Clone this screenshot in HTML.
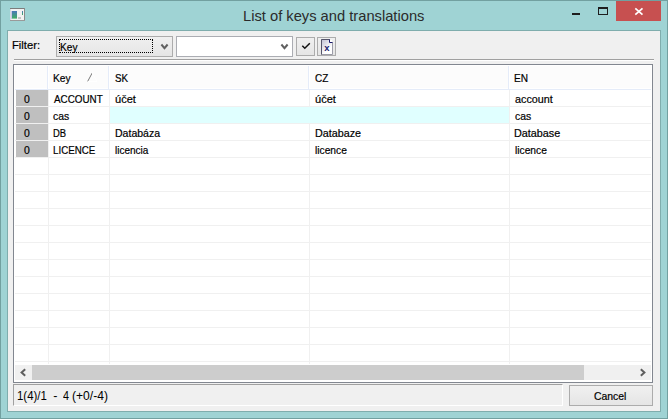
<!DOCTYPE html>
<html><head><meta charset="utf-8">
<style>
*{box-sizing:border-box;margin:0;padding:0}
html,body{width:668px;height:419px;overflow:hidden;background:#9fd3d4}
body{font-family:"Liberation Sans","DejaVu Sans",sans-serif;font-size:11px;color:#000;position:relative}
.abs{position:absolute}
#win{left:0;top:0;width:668px;height:419px;background:#9fd3d4;border:1px solid #72a0a0}
#inner{left:7px;top:30px;width:654px;height:382px;background:#f0f0f0;border:1px solid #7fadad}
.combo{height:21px;top:36px;border:1px solid #acacac;background:linear-gradient(#f0f0f0,#e5e5e5)}
.btn{border:1px solid #acacac;background:linear-gradient(#f0f0f0,#e5e5e5)}
#grid{left:13px;top:64px;width:640px;height:319px;background:#fff;border:1px solid #828790}
.hl{background:#e5ecf9;height:1px}
.vl{background:#e5ecf9;width:1px}
.rl{background:#f0f0f0;height:1px}
.cl{background:#f0f0f0;width:1px}
.ind{left:16px;width:32px;height:16px;background:#bfbfbf}
.t{white-space:nowrap;line-height:16px;height:16px;transform-origin:0 0;-webkit-text-stroke:0.2px #000}
</style></head><body>
<div id="win" class="abs"></div>
<div id="inner" class="abs"></div>
<!-- app icon -->
<svg class="abs" style="left:10px;top:8px" width="15" height="13" viewBox="0 0 15 13">
<defs><linearGradient id="g1" x1="0" y1="0" x2="0" y2="1"><stop offset="0" stop-color="#4a78b8"/><stop offset="1" stop-color="#3fae62"/></linearGradient></defs>
<rect x="0" y="0" width="15" height="13" fill="#f2f2f2"/>
<rect x="0" y="0" width="15" height="1" fill="#7c7c7c"/>
<rect x="14" y="0" width="1" height="13" fill="#8a8a8a"/>
<rect x="0" y="12" width="15" height="1" fill="#9a9a9a"/>
<rect x="0" y="1" width="1" height="11" fill="#d8dede"/>
<rect x="1" y="3" width="1" height="8" fill="#c9c6ea"/><rect x="2" y="3" width="5" height="7.6" fill="url(#g1)"/>
<rect x="8" y="9" width="3" height="2" fill="#c4c4c4"/>
<rect x="12" y="3" width="1" height="4" fill="url(#g1)"/>
</svg>
<!-- window buttons -->
<div class="abs" style="left:572px;top:13px;width:8px;height:2px;background:#1e1e1e"></div>
<div class="abs" style="left:598px;top:7px;width:10px;height:8px;border:1px solid #1e1e1e;border-top-width:2px"></div>
<div class="abs" style="left:616px;top:1px;width:45px;height:20px;background:#c75050"></div>
<svg class="abs" style="left:634px;top:7px" width="10" height="9" viewBox="0 0 10 9"><path d="M1.3 1.3 L8.5 7.7 M8.5 1.3 L1.3 7.7" stroke="#fff" stroke-width="1.7" fill="none"/></svg>

<div class="abs combo" style="left:56px;width:117px"></div>
<div class="abs" style="left:59px;top:39px;width:94px;height:14px;border:1px dotted #000"></div>
<svg class="abs" style="left:160px;top:43px" width="9" height="8" viewBox="0 0 9 8"><path d="M1.4 1.5 L4.5 5.1 L7.6 1.5" stroke="#606060" stroke-width="2" fill="none"/></svg>
<div class="abs combo" style="left:176px;width:117px;background:#fff;border-color:#abadb3"></div>
<svg class="abs" style="left:280px;top:43px" width="9" height="8" viewBox="0 0 9 8"><path d="M1.4 1.5 L4.5 5.1 L7.6 1.5" stroke="#606060" stroke-width="2" fill="none"/></svg>
<div class="abs btn" style="left:296px;top:37px;width:19px;height:19px"></div>
<svg class="abs" style="left:301px;top:42px" width="10" height="8" viewBox="0 0 10 8"><path d="M1.3 3.8 L3.8 6.3 L8.8 1.3" stroke="#111" stroke-width="1.5" fill="none"/></svg>
<div class="abs btn" style="left:317px;top:37px;width:19px;height:19px"></div>
<svg class="abs" style="left:321px;top:39px" width="12" height="16" viewBox="0 0 12 16">
<defs><linearGradient id="g2" x1="0" y1="0" x2="0.7" y2="1"><stop offset="0" stop-color="#bfbfd2"/><stop offset="0.75" stop-color="#ffffff"/></linearGradient></defs>
<path d="M0.5 0.5 H8.5 L11.5 3.5 V15.5 H0.5 Z" fill="url(#g2)" stroke="#9c9ca8" stroke-width="1"/>
<path d="M0.5 15.5 V0.5 H8.5" fill="none" stroke="#55556a" stroke-width="1"/>
<rect x="9" y="1" width="2" height="2.5" fill="#fff"/>
<path d="M8.5 0.5 V3.5 H11.5" fill="none" stroke="#1a1a6a" stroke-width="1"/>
<text x="3.3" y="11.8" font-family="Liberation Sans, sans-serif" font-size="9.5" font-weight="bold" fill="#1a1a6e">x</text>
</svg>
<div class="abs" style="left:14px;top:59px;width:640px;height:1px;background:#a0a0a0"></div>
<div class="abs" style="left:14px;top:60px;width:640px;height:1px;background:#fff"></div>

<div id="grid" class="abs"></div>
<div class="abs" style="left:15px;top:66px;width:636px;height:23px;background:#fcfcfc"></div><div class="abs" style="left:15px;top:88px;width:636px;height:1px;background:#fff"></div>
<div class="abs hl" style="left:15px;top:89px;width:636px"></div>
<div class="abs vl" style="left:47px;top:66px;height:23px"></div><div class="abs" style="left:48px;top:66px;height:23px;width:1px;background:#fff"></div>
<div class="abs vl" style="left:108px;top:66px;height:23px"></div><div class="abs" style="left:109px;top:66px;height:23px;width:1px;background:#fff"></div>
<div class="abs vl" style="left:308px;top:66px;height:23px"></div><div class="abs" style="left:309px;top:66px;height:23px;width:1px;background:#fff"></div>
<div class="abs vl" style="left:508px;top:66px;height:23px"></div><div class="abs" style="left:509px;top:66px;height:23px;width:1px;background:#fff"></div>
<svg class="abs" style="left:86px;top:72px" width="13" height="11" viewBox="0 0 13 11"><path d="M1.5 9.7 L6.2 1" stroke="#7a7a7a" stroke-width="1" fill="none"/><path d="M6.2 1 L11 9.5 H1.5" stroke="#fff" stroke-width="1" fill="none"/></svg>
<div class="abs cl" style="left:48px;top:90px;height:274px"></div>
<div class="abs cl" style="left:109px;top:90px;height:274px"></div>
<div class="abs cl" style="left:309px;top:90px;height:274px"></div>
<div class="abs cl" style="left:509px;top:90px;height:274px"></div>
<div class="abs rl" style="left:15px;top:106px;width:636px"></div><div class="abs rl" style="left:15px;top:123px;width:636px"></div><div class="abs rl" style="left:15px;top:140px;width:636px"></div><div class="abs rl" style="left:15px;top:157px;width:636px"></div><div class="abs rl" style="left:15px;top:174px;width:636px"></div><div class="abs rl" style="left:15px;top:191px;width:636px"></div><div class="abs rl" style="left:15px;top:208px;width:636px"></div><div class="abs rl" style="left:15px;top:225px;width:636px"></div><div class="abs rl" style="left:15px;top:242px;width:636px"></div><div class="abs rl" style="left:15px;top:259px;width:636px"></div><div class="abs rl" style="left:15px;top:276px;width:636px"></div><div class="abs rl" style="left:15px;top:293px;width:636px"></div><div class="abs rl" style="left:15px;top:310px;width:636px"></div><div class="abs rl" style="left:15px;top:327px;width:636px"></div><div class="abs rl" style="left:15px;top:344px;width:636px"></div><div class="abs rl" style="left:15px;top:361px;width:636px"></div>
<div class="abs" style="left:110px;top:107px;width:399px;height:16px;background:#e0ffff"></div>
<div class="abs ind" style="top:90px"></div>
<div class="abs ind" style="top:107px"></div>
<div class="abs ind" style="top:124px"></div>
<div class="abs ind" style="top:141px"></div>
<!-- scrollbar -->
<div class="abs" style="left:15px;top:365px;width:636px;height:15px;background:#f0f0f0"></div>
<div class="abs" style="left:32px;top:365px;width:552px;height:15px;background:#cdcdcd"></div>
<svg class="abs" style="left:19px;top:368px" width="8" height="9" viewBox="0 0 8 9"><path d="M6.2 1.3 L2.6 4.5 L6.2 7.7" stroke="#5e5e5e" stroke-width="2" fill="none"/></svg>
<svg class="abs" style="left:639px;top:368px" width="8" height="9" viewBox="0 0 8 9"><path d="M1.8 1.3 L5.4 4.5 L1.8 7.7" stroke="#5e5e5e" stroke-width="2" fill="none"/></svg>
<!-- status -->
<div class="abs" style="left:13px;top:384px;width:550px;height:22px;border:1px solid #fff;border-top-color:#a0a0a0;border-left-color:#a0a0a0"></div>
<div class="abs btn" style="left:569px;top:385px;width:84px;height:21px"></div>
<div class="abs t" id="filter" style="left:12.34px;top:37px;transform:scaleX(1.0192);">Filter:</div>
<div class="abs t" id="keyc" style="left:59.71px;top:39px;transform:scaleX(0.9205);">Key</div>
<div class="abs t" id="keyh" style="left:53.10px;top:70px;transform:scaleX(0.9315);">Key</div>
<div class="abs t" id="sk" style="left:114.55px;top:70px;transform:scaleX(0.8929);">SK</div>
<div class="abs t" id="cz" style="left:314.85px;top:70px;transform:scaleX(0.9071);">CZ</div>
<div class="abs t" id="en" style="left:514.41px;top:70px;transform:scaleX(0.9164);">EN</div>
<div class="abs t" id="r1k" style="left:53.50px;top:91px;transform:scaleX(0.8959);">ACCOUNT</div>
<div class="abs t" id="r2k" style="left:53.26px;top:108px;transform:scaleX(0.9455);">cas</div>
<div class="abs t" id="r3k" style="left:52.86px;top:125px;transform:scaleX(0.8571);">DB</div>
<div class="abs t" id="r4k" style="left:52.84px;top:142px;transform:scaleX(0.8860);">LICENCE</div>
<div class="abs t" id="r1s" style="left:114.50px;top:91px;transform:scaleX(1.0049);">účet</div>
<div class="abs t" id="r3s" style="left:114.88px;top:125px;transform:scaleX(0.9570);">Databáza</div>
<div class="abs t" id="r4s" style="left:115.14px;top:142px;transform:scaleX(0.9103);">licencia</div>
<div class="abs t" id="r1c" style="left:314.80px;top:91px;transform:scaleX(1.0049);">účet</div>
<div class="abs t" id="r3c" style="left:314.57px;top:125px;transform:scaleX(0.9783);">Databaze</div>
<div class="abs t" id="r4c" style="left:314.83px;top:142px;transform:scaleX(0.9313);">licence</div>
<div class="abs t" id="r1e" style="left:514.86px;top:91px;transform:scaleX(0.9792);">account</div>
<div class="abs t" id="r2e" style="left:514.86px;top:108px;transform:scaleX(0.9455);">cas</div>
<div class="abs t" id="r3e" style="left:514.36px;top:125px;transform:scaleX(0.9826);">Database</div>
<div class="abs t" id="r4e" style="left:514.63px;top:142px;transform:scaleX(0.9313);">licence</div>
<div class="abs t" id="i1" style="left:23.96px;top:91px;transform:scaleX(0.9455);">0</div>
<div class="abs t" id="i2" style="left:23.96px;top:108px;transform:scaleX(0.9455);">0</div>
<div class="abs t" id="i3" style="left:23.96px;top:125px;transform:scaleX(0.9455);">0</div>
<div class="abs t" id="i4" style="left:23.96px;top:142px;transform:scaleX(0.9455);">0</div>
<div class="abs t" id="s1" style="left:16.98px;top:388px;transform:scaleX(0.9161);font-size:12.5px;-webkit-text-stroke:0">1(4)/1</div>
<div class="abs t" id="s2" style="left:53.30px;top:388px;transform:scaleX(1.0000);font-size:12.5px;-webkit-text-stroke:0">-</div>
<div class="abs t" id="s3" style="left:63.08px;top:388px;transform:scaleX(0.8640);font-size:12.5px;-webkit-text-stroke:0">4</div>
<div class="abs t" id="s4" style="left:71.87px;top:388px;transform:scaleX(0.9678);font-size:12.5px;-webkit-text-stroke:0">(+0/-4)</div>
<div class="abs t" id="cancel" style="left:594.13px;top:388px;transform:scaleX(0.9474);">Cancel</div>
<div class="abs t" id="title" style="left:243.07px;top:7px;transform:scaleX(0.9801);font-size:15px;line-height:18px;height:18px;color:#2b2b2b;-webkit-text-stroke:0">List of keys and translations</div>
</body></html>
